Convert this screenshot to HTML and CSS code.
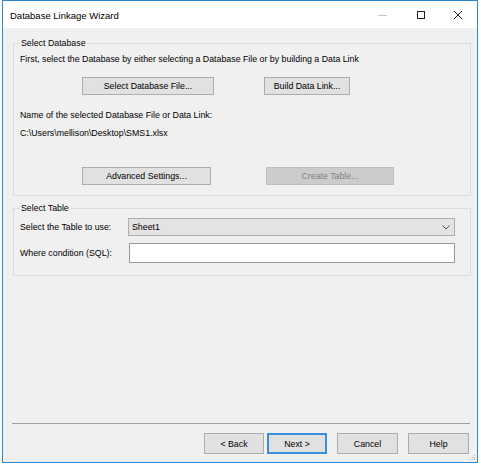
FILE: index.html
```html
<!DOCTYPE html>
<html>
<head>
<meta charset="utf-8">
<link rel="stylesheet" href="styles.css">
</head>
<body>
<div class="window">
  <div class="titlebar">
    <span class="title">Database Linkage Wizard</span>
    <div class="caption">
      <span class="cb"><svg width="10" height="10" viewBox="0 0 10 10"><path d="M0 5.5h9" stroke="#c4c4c4" stroke-width="1"/></svg></span>
      <span class="cb"><svg width="10" height="10" viewBox="0 0 10 10"><rect x="1.5" y="1.5" width="7" height="7" fill="none" stroke="#222" stroke-width="1"/></svg></span>
      <span class="cb"><svg width="10" height="10" viewBox="0 0 10 10"><path d="M1 1l8 8M9 1l-8 8" stroke="#222" stroke-width="1"/></svg></span>
    </div>
  </div>
  <div class="client">
    <div class="group g1">
      <span class="legend">Select Database</span>
      <p class="intro">First, select the Database by either selecting a Database File or by building a Data Link</p>
      <div class="btnrow r1">
        <button class="btn b-select">Select Database File...</button>
        <button class="btn b-build">Build Data Link...</button>
      </div>
      <p class="line">Name of the selected Database File or Data Link:</p>
      <p class="line">C:\Users\mellison\Desktop\SMS1.xlsx</p>
      <div class="btnrow r2">
        <button class="btn b-adv">Advanced Settings...</button>
        <button class="btn b-create" disabled>Create Table...</button>
      </div>
    </div>
    <div class="group g2">
      <span class="legend">Select Table</span>
      <div class="field f1">
        <span class="flabel">Select the Table to use:</span>
        <div class="combo"><span>Sheet1</span><svg width="8" height="5" viewBox="0 0 8 5"><path d="M0.5 0.5l3.5 3.5 3.5-3.5" fill="none" stroke="#555" stroke-width="1"/></svg></div>
      </div>
      <div class="field f2">
        <span class="flabel">Where condition (SQL):</span>
        <div class="input"></div>
      </div>
    </div>
    <div class="spacer"></div>
    <div class="sep"></div>
    <div class="footer">
      <button class="btn fb b-back">&lt; Back</button>
      <button class="btn fb b-next">Next &gt;</button>
      <button class="btn fb b-cancel">Cancel</button>
      <button class="btn fb b-help">Help</button>
    </div>
    <div class="grip"><svg width="7" height="7" viewBox="0 0 7 7" fill="#b0b0b0"><rect x="5" y="1" width="1" height="1"/><rect x="3" y="3" width="1" height="1"/><rect x="5" y="3" width="1" height="1"/><rect x="1" y="5" width="1" height="1"/><rect x="3" y="5" width="1" height="1"/><rect x="5" y="5" width="1" height="1"/></svg></div>
  </div>
</div>
</body>
</html>
```

FILE: styles.css
```css
html, body {
  margin: 0;
  padding: 0;
  background: #ffffff;
}
body {
  font-family: "Liberation Sans", Arial, sans-serif;
  font-size: 8.8px;
  color: #000;
}
.window {
  margin-left: 2px;
  width: 476px;
  height: 463px;
  box-sizing: border-box;
  border: 1px solid #2b88d8;
  display: flex;
  flex-direction: column;
  background: #f0f0f0;
}
.titlebar {
  height: 27px;
  background: #ffffff;
  display: flex;
  align-items: center;
  flex: none;
}
.title {
  font-size: 9.5px;
  padding-left: 7px;
  flex: 1;
  padding-top: 1px;
}
.caption {
  display: flex;
  height: 27px;
}
.cb {
  width: 37.5px;
  display: flex;
  align-items: center;
  justify-content: center;
}
.client {
  flex: 1;
  display: flex;
  flex-direction: column;
  position: relative;
}
.group {
  position: relative;
  border: 1px solid #dcdcdc;
  margin-left: 10px;
  margin-right: 6px;
}
.g1 {
  margin-top: 15px;
  padding: 10px 0 10px 6px;
}
.g2 {
  margin-top: 12px;
  padding: 9px 0 12px 6px;
}
.legend {
  position: absolute;
  left: 6px;
  top: -6px;
  line-height: 11px;
  padding: 0 1px;
  background: #f0f0f0;
}
p {
  margin: 0;
}
.intro {
  line-height: 11px;
}
.line {
  line-height: 18px;
}
.btnrow {
  display: flex;
  padding-left: 62px;
}
.r1 {
  margin-top: 12px;
  margin-bottom: 11px;
}
.r2 {
  margin-top: 25px;
}
.btn {
  font-family: "Liberation Sans", Arial, sans-serif;
  font-size: 8.8px;
  color: #000;
  background: #e1e1e1;
  border: 1px solid #adadad;
  height: 18px;
  padding: 0;
  margin: 0;
  box-sizing: border-box;
}
.b-select { width: 132px; }
.b-build { width: 86px; margin-left: 50px; }
.b-adv { width: 129px; }
.b-create {
  width: 128px;
  margin-left: 55px;
  background: #cccccc;
  border-color: #bfbfbf;
  color: #838383;
}
.field {
  display: flex;
  align-items: center;
}
.f2 {
  margin-top: 7px;
}
.flabel {
  width: 108px;
  flex: none;
}
.combo {
  width: 327px;
  height: 18px;
  box-sizing: border-box;
  background: #e3e3e3;
  border: 1px solid #adadad;
  display: flex;
  align-items: center;
  justify-content: space-between;
  padding: 0 4px 0 3px;
}
.input {
  width: 326px;
  height: 20px;
  margin-left: 1px;
  box-sizing: border-box;
  background: #ffffff;
  border: 1px solid #9a9a9a;
}
.spacer {
  flex: 1;
}
.sep {
  height: 0;
  border-top: 1px solid #a0a0a0;
  margin: 0 7px 0 9px;
}
.footer {
  display: flex;
  justify-content: flex-end;
  margin-top: 9px;
  padding-right: 8px;
  padding-bottom: 8px;
}
.fb {
  height: 21px;
  width: 61px;
}
.b-back { width: 60px; }
.b-next {
  width: 60px;
  margin-left: 3px;
  border: 2px solid #3a8ee0;
}
.b-cancel { margin-left: 10px; }
.b-help { margin-left: 10px; }
.grip {
  position: absolute;
  right: 1px;
  bottom: 1px;
  line-height: 0;
}
```
